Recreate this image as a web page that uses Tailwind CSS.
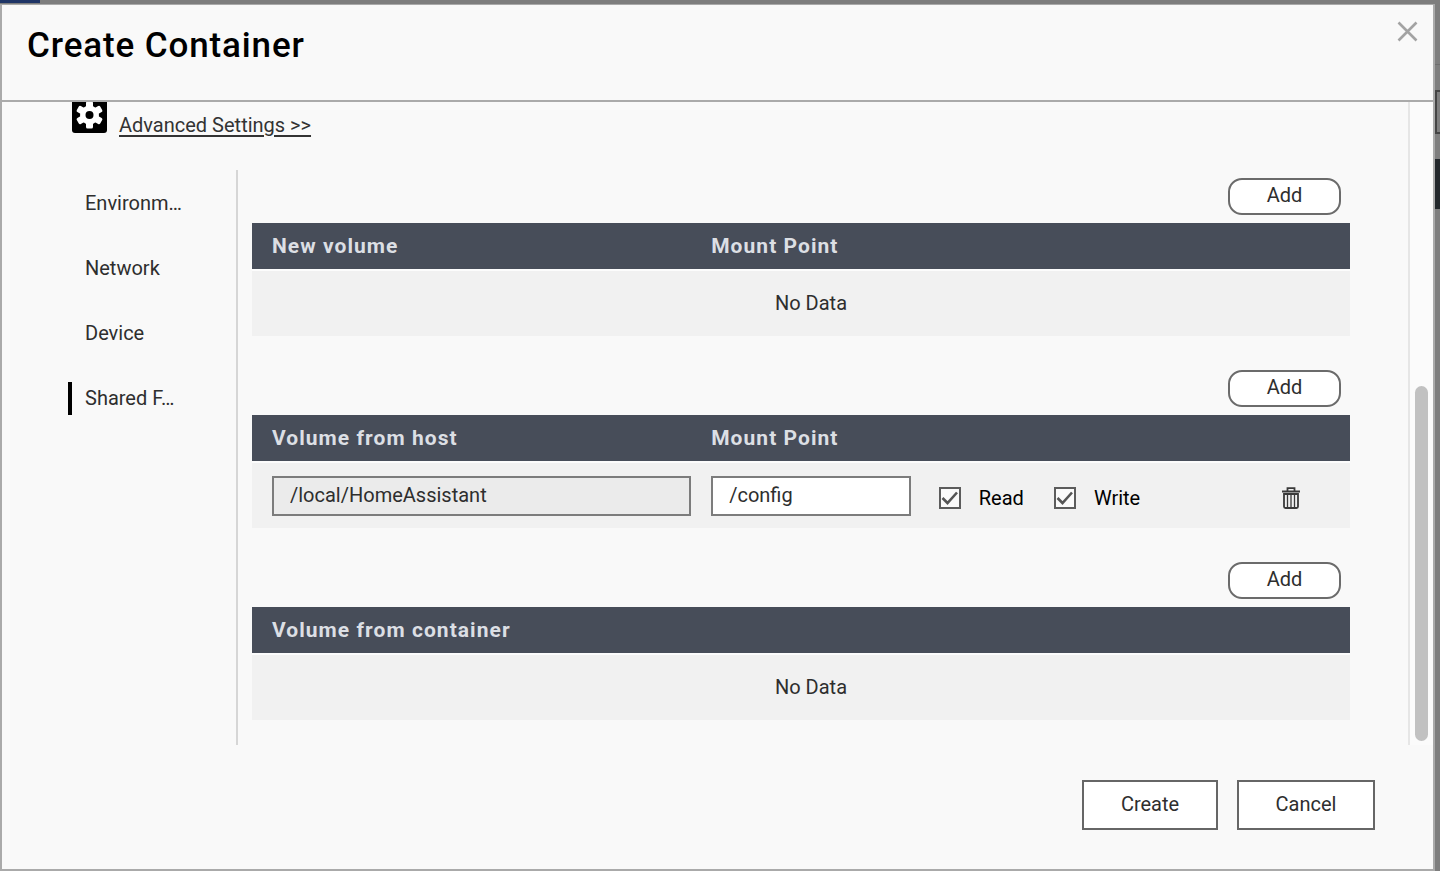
<!DOCTYPE html>
<html lang="en">
<head>
<meta charset="utf-8">
<title>Create Container</title>
<script src="https://cdn.jsdelivr.net/npm/@tailwindcss/browser@4"></script>
</head>
<body class="relative flex h-screen flex-col overflow-hidden bg-[#7e7e7e] pt-1 pr-[5px] font-['Roboto',sans-serif] text-xl leading-6 text-[#2e2e2e]">
  <!-- dimmed page behind the dialog -->
  <div class="absolute top-0 left-0 h-[3px] w-10 bg-[#1f3566]"></div>
  <div class="absolute top-16 right-0 h-px w-[5px] bg-[#6e6e6e]"></div>
  <div class="absolute top-[90px] right-0 h-11 w-[5px] border-y-2 border-l-2 border-[#444]"></div>
  <div class="absolute top-[159px] right-0 h-[50px] w-[5px] bg-[#22272b]"></div>

  <div role="dialog" aria-labelledby="title" class="flex min-h-0 flex-1 flex-col border-2 border-t border-[#aaa] bg-[#f9f9f9]">
    <header class="flex h-[97px] shrink-0 items-start justify-between border-b-2 border-[#aaa] pt-4 pr-[15px] pl-[25px]">
      <h1 id="title" class="pt-[5px] text-[35px] leading-10 font-medium tracking-wide text-black">Create Container</h1>
      <button type="button" aria-label="Close">
        <svg class="size-[21px]" viewBox="0 0 21 21" fill="none" stroke="#a3a3a3" stroke-width="2.6"><path d="M1.5 1.5l18 18M19.5 1.5l-18 18"/></svg>
      </button>
    </header>

    <div class="flex min-h-0 flex-1">
      <main class="flex min-w-0 flex-1 flex-col overflow-hidden pr-[58px] pl-[66px]">
        <div class="-mt-1 flex h-[72px] shrink-0 items-start gap-3 pl-1">
          <svg class="size-[35px]" viewBox="0 0 35 35">
            <rect width="35" height="35" rx="3" fill="#000"/>
            <g fill="#fff">
              <circle cx="17.500" cy="17" r="9.500"/>
              <rect x="14" y="3.500" width="7" height="27" rx="1.500"/>
              <rect x="14" y="3.500" width="7" height="27" rx="1.500" transform="rotate(60 17.500 17)"/>
              <rect x="14" y="3.500" width="7" height="27" rx="1.500" transform="rotate(120 17.500 17)"/>
            </g>
            <circle cx="17.500" cy="17" r="4" fill="#000"/>
          </svg>
          <a href="#" class="pt-[15px] text-[#333] underline underline-offset-3">Advanced Settings &gt;&gt;</a>
        </div>

        <div class="flex min-h-0 flex-1">
          <nav class="flex w-[170px] shrink-0 flex-col gap-8 border-r-2 border-[#d6d6d6] pt-[17px]">
            <a href="#" title="Environment" class="w-[120px] border-l-4 border-transparent pl-[13px] leading-[33px]">Environm…</a>
            <a href="#" class="w-[120px] border-l-4 border-transparent pl-[13px] leading-[33px]">Network</a>
            <a href="#" class="w-[120px] border-l-4 border-transparent pl-[13px] leading-[33px]">Device</a>
            <a href="#" title="Shared Folders" aria-current="page" class="w-[120px] border-l-4 border-black pl-[13px] leading-[33px]">Shared F…</a>
          </nav>

          <div class="flex min-w-0 flex-1 flex-col gap-[34px] pt-2 pl-[14px]">
            <section class="flex flex-col gap-2">
              <button type="button" class="mr-[9px] h-[37px] w-[113px] self-end rounded-[14px] border-2 border-[#6b6b6b] bg-white pb-1">Add</button>
              <table class="w-full table-fixed text-left">
                <thead class="border-b-2 border-[#fcfcfc] bg-[#474d59] text-[21px] text-[#dcdfe4]">
                  <tr class="h-[47px]"><th class="w-[40%] pl-5 font-bold tracking-wider">New volume</th><th class="pl-5 font-bold tracking-wider">Mount Point</th></tr>
                </thead>
                <tbody class="bg-[#f1f1f1]">
                  <tr class="h-[66px]"><td colspan="2" class="pb-0.5 pl-5 text-center">No Data</td></tr>
                </tbody>
              </table>
            </section>

            <section class="flex flex-col gap-2">
              <button type="button" class="mr-[9px] h-[37px] w-[113px] self-end rounded-[14px] border-2 border-[#6b6b6b] bg-white pb-1">Add</button>
              <table class="w-full table-fixed text-left">
                <thead class="border-b-2 border-[#fcfcfc] bg-[#474d59] text-[21px] text-[#dcdfe4]">
                  <tr class="h-[47px]"><th class="w-[40%] pl-5 font-bold tracking-wider">Volume from host</th><th class="w-[20%] pl-5 font-bold tracking-wider">Mount Point</th><td></td><td class="w-[118px]"></td></tr>
                </thead>
                <tbody class="bg-[#f1f1f1]">
                  <tr class="h-[66px]">
                    <td class="pl-5"><input type="text" aria-label="Volume from host" readonly value="/local/HomeAssistant" class="block h-10 w-full border-2 border-[#7c7c7c] bg-[#ebebeb] px-4 pb-0.5"></td>
                    <td class="pl-5"><input type="text" aria-label="Mount Point" value="/config" class="block h-10 w-full border-2 border-[#7c7c7c] bg-white px-4 pb-0.5"></td>
                    <td class="pt-1 pl-7 text-black">
                      <div class="flex gap-[30px]">
                        <label class="flex items-center gap-[18px]">
                          <span class="grid">
                            <input type="checkbox" checked class="col-start-1 row-start-1 size-[22px] appearance-none border-2 border-[#5c5c5c] bg-[#fafafa]">
                            <svg class="pointer-events-none col-start-1 row-start-1 size-[22px]" viewBox="0 0 22 22" fill="none" stroke="#555" stroke-width="2.600"><path d="M3.500 11l5 5 9.500-10.500"/></svg>
                          </span>Read
                        </label>
                        <label class="flex items-center gap-[18px]">
                          <span class="grid">
                            <input type="checkbox" checked class="col-start-1 row-start-1 size-[22px] appearance-none border-2 border-[#5c5c5c] bg-[#fafafa]">
                            <svg class="pointer-events-none col-start-1 row-start-1 size-[22px]" viewBox="0 0 22 22" fill="none" stroke="#555" stroke-width="2.600"><path d="M3.500 11l5 5 9.500-10.500"/></svg>
                          </span>Write
                        </label>
                      </div>
                    </td>
                    <td class="pt-1">
                      <button type="button" aria-label="Delete" class="mx-auto block">
                        <svg class="h-[22px] w-[18px]" viewBox="0 0 18 22" fill="none" stroke="#3a3a3a"><path stroke-width="1.800" d="M0 4.500h18M5.500 4V1.200h7V4M2 7v12.500q0 1.500 1.500 1.500h11q1.500 0 1.500-1.500V7z"/><path stroke-width="1.300" d="M5.500 7.500v13M9 7.500v13M12.500 7.500v13"/></svg>
                      </button>
                    </td>
                  </tr>
                </tbody>
              </table>
            </section>

            <section class="flex flex-col gap-2">
              <button type="button" class="mr-[9px] h-[37px] w-[113px] self-end rounded-[14px] border-2 border-[#6b6b6b] bg-white pb-1">Add</button>
              <table class="w-full table-fixed text-left">
                <thead class="border-b-2 border-[#fcfcfc] bg-[#474d59] text-[21px] text-[#dcdfe4]">
                  <tr class="h-[47px]"><th class="pl-5 font-bold tracking-wider">Volume from container</th></tr>
                </thead>
                <tbody class="bg-[#f1f1f1]">
                  <tr class="h-[66px]"><td class="pb-0.5 pl-5 text-center">No Data</td></tr>
                </tbody>
              </table>
            </section>
          </div>
        </div>
      </main>
      <!-- scrollbar -->
      <div class="flex w-[25px] shrink-0 flex-col justify-end border-l-2 border-[#e6e6e6] bg-[#fbfbfb] pb-1 pl-[5px]">
        <div class="h-5/9 w-[13px] rounded-full bg-[#c1c1c1]"></div>
      </div>
    </div>

    <footer class="flex shrink-0 justify-end gap-[19px] pt-[35px] pr-[58px] pb-[39px]">
      <button type="button" class="h-[50px] w-[136px] border-2 border-[#666] bg-white pb-0.5">Create</button>
      <button type="button" class="h-[50px] w-[138px] border-2 border-[#666] bg-white pb-0.5">Cancel</button>
    </footer>
  </div>
</body>
</html>
